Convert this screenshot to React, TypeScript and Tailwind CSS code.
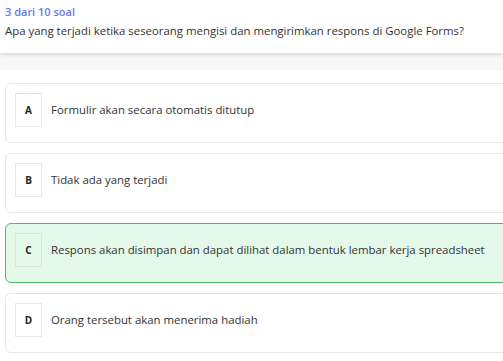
const options = [
  { key: "A", text: "Formulir akan secara otomatis ditutup" },
  { key: "B", text: "Tidak ada yang terjadi" },
  { key: "C", text: "Respons akan disimpan dan dapat dilihat dalam bentuk lembar kerja spreadsheet", selected: true },
  { key: "D", text: "Orang tersebut akan menerima hadiah" },
];

export default function App() {
  return (
    <div className="h-[361px] w-[503px] overflow-hidden bg-white font-['Open_Sans',sans-serif]">
      <div className="relative z-10 h-[53px] bg-white px-[5px] pt-[3px] shadow-[0_2px_3px_rgba(0,0,0,0.12)]">
        <p className="text-[11px] font-semibold leading-[17px] text-[#6677f5]">3 dari 10 soal</p>
        <p className="mt-[3px] text-[11.4px] leading-[16px] text-[#333]">
          Apa yang terjadi ketika seseorang mengisi dan mengirimkan respons di Google Forms?
        </p>
      </div>
      <div className="h-[17px] bg-[#f7f8fa]" />
      <div className="flex flex-col gap-[10px] pl-[5px] pt-[13px]">
        {options.map((o) => (
          <div
            key={o.key}
            className={
              o.selected
                ? "h-[60px] w-[510px] rounded-md border border-[#4fb872] bg-[#e4f9ea] pl-[9px] pt-[9px]"
                : "h-[60px] w-[510px] rounded-md border border-[#e3e7ee] bg-white pl-[9px] pt-[9px]"
            }
          >
            <div className="flex items-center gap-[9px]">
              <div
                className={
                  o.selected
                    ? "flex h-[34px] w-[27px] items-center justify-center border border-[#dde4e0] text-[10px] font-bold text-[#222]"
                    : "flex h-[34px] w-[27px] items-center justify-center border border-[#e3e7ee] text-[10px] font-bold text-[#222]"
                }
              >
                {o.key}
              </div>
              <span className="text-[11.4px] text-[#333]">{o.text}</span>
            </div>
          </div>
        ))}
      </div>
    </div>
  );
}
